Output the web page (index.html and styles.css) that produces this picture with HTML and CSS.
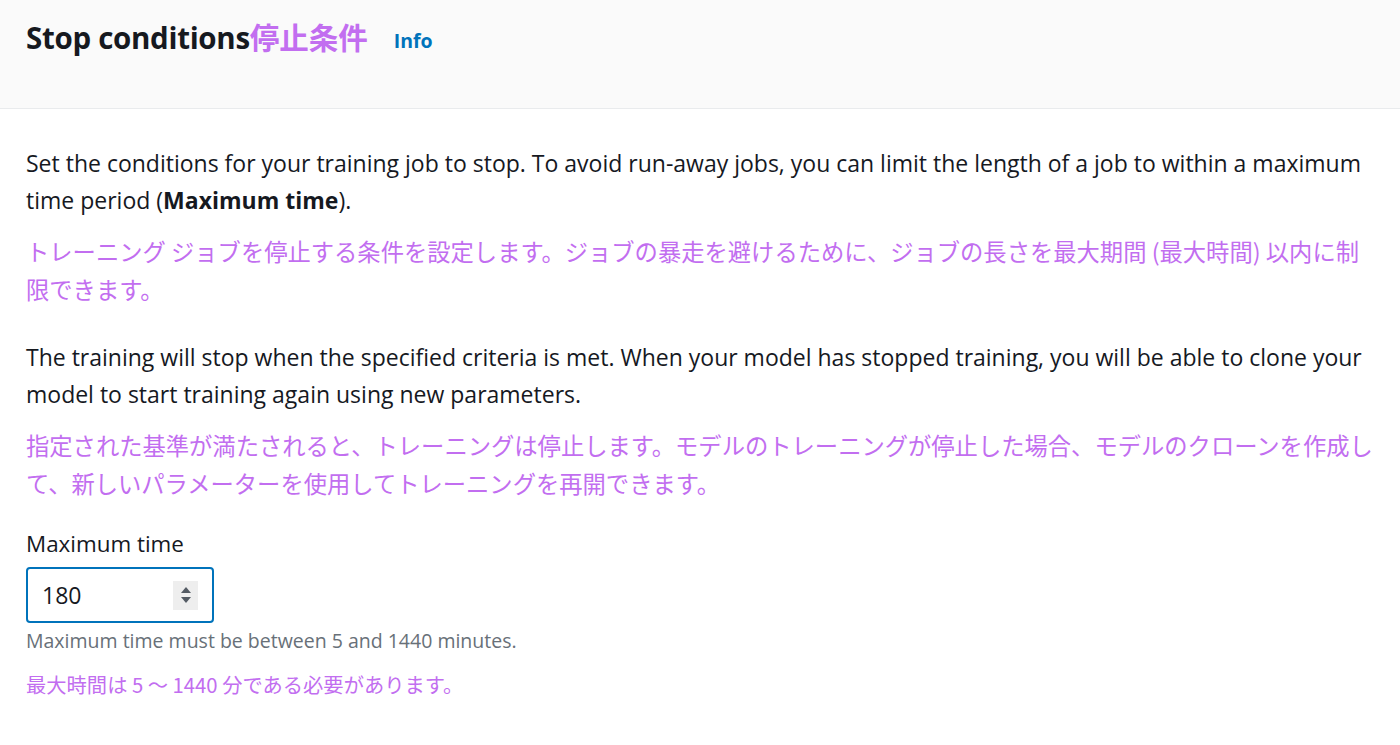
FILE: index.html
```html
<!DOCTYPE html>
<html lang="en">
<head>
<meta charset="utf-8">
<link rel="stylesheet" href="styles.css">
</head>
<body>
<div class="panel">
  <header class="panel-header">
    <h2 class="title">Stop conditions<span class="jp-title">停止条件</span></h2>
    <a class="info" href="#">Info</a>
  </header>
  <section class="panel-body">
    <p class="text">Set the conditions for your training job to stop. To avoid run-away jobs, you can limit the length of a job to within a maximum<br>time period (<b>Maximum time</b>).</p>
    <p class="jp">トレーニング ジョブを停止する条件を設定します。ジョブの暴走を避けるために、ジョブの長さを最大期間 (最大時間) 以内に制<br>限できます。</p>
    <p class="text">The training will stop when the specified criteria is met. When your model has stopped training, you will be able to clone your<br>model to start training again using new parameters.</p>
    <p class="jp">指定された基準が満たされると、トレーニングは停止します。モデルのトレーニングが停止した場合、モデルのクローンを作成し<br>て、新しいパラメーターを使用してトレーニングを再開できます。</p>
    <div class="field">
      <label class="label">Maximum time</label>
      <div class="input">
        <span class="value">180</span>
        <span class="spinner">
          <svg width="12" height="22" viewBox="0 0 12 22"><path d="M1 9 L6 3 L11 9 Z" fill="#545b64"/><path d="M1 13 L6 19 L11 13 Z" fill="#545b64"/></svg>
        </span>
      </div>
      <div class="hint">Maximum time must be between 5 and 1440 minutes.</div>
      <div class="hint-jp">最大時間は 5 〜 1440 分である必要があります。</div>
    </div>
  </section>
</div>
</body>
</html>
```

FILE: styles.css
```css
html, body {
  margin: 0;
  padding: 0;
  background: #ffffff;
}
body {
  font-family: "Open Sans", "Noto Sans CJK JP", sans-serif;
  color: #16191f;
}
.panel-header {
  height: 109px;
  box-sizing: border-box;
  background: #fafafa;
  border-bottom: 1px solid #e9ebed;
  display: flex;
  align-items: flex-start;
  padding: 14px 26px 0;
}
.title {
  margin: 0;
  font-size: 29.5px;
  font-weight: 700;
  line-height: 44px;
  letter-spacing: -0.3px;
}
.jp-title {
  font-family: "Noto Sans CJK JP", sans-serif;
  color: #c26ef0;
  font-weight: 700;
  letter-spacing: 0;
}
.info {
  margin-left: 26px;
  margin-top: 14px;
  font-size: 19.5px;
  font-weight: 700;
  color: #0073bb;
  text-decoration: none;
  line-height: 26px;
}
.panel-body {
  padding: 36px 26px 0;
}
.text {
  margin: 0;
  font-size: 23px;
  line-height: 37px;
  letter-spacing: 0;
  white-space: nowrap;
}
.text b {
  font-weight: 700;
}
.jp {
  margin: 13px 0 0;
  font-family: "Noto Sans CJK JP", sans-serif;
  font-size: 23.3px;
  line-height: 38px;
  color: #c26ef0;
  white-space: nowrap;
}
.jp + .text {
  margin-top: 31px;
}
.field {
  margin-top: 26px;
  display: flex;
  flex-direction: column;
  align-items: flex-start;
}
.label {
  font-size: 22.4px;
  line-height: 32px;
}
.input {
  margin-top: 7px;
  width: 188px;
  height: 56px;
  box-sizing: border-box;
  border: 2px solid #0073bb;
  border-radius: 4px;
  display: flex;
  align-items: center;
  padding: 0 14px 0 14px;
}
.value {
  flex: 1;
  font-size: 23px;
}
.spinner {
  width: 25px;
  height: 29px;
  background: #eeeeee;
  display: flex;
  align-items: center;
  justify-content: center;
}
.hint {
  margin-top: 4px;
  font-size: 19.5px;
  line-height: 28px;
  color: #687078;
}
.hint-jp {
  margin-top: 15px;
  font-family: "Noto Sans CJK JP", sans-serif;
  font-size: 20.3px;
  line-height: 28px;
  color: #c26ef0;
}
```
